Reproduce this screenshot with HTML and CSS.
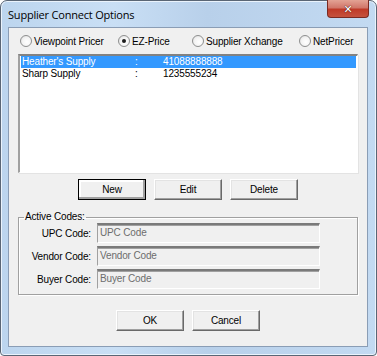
FILE: index.html
```html
<!DOCTYPE html>
<html>
<head>
<meta charset="utf-8">
<link rel="stylesheet" href="styles.css">
</head>
<body>
<div class="window">
  <div class="titlebar">
    <span class="title">Supplier Connect Options</span>
    <div class="close"><span class="x">✕</span></div>
  </div>
  <div class="client">
    <div class="radios">
      <label class="radio r1"><span class="dot"></span>Viewpoint Pricer</label>
      <label class="radio r2"><span class="dot checked"></span>EZ-Price</label>
      <label class="radio r3"><span class="dot"></span>Supplier Xchange</label>
      <label class="radio r4"><span class="dot"></span>NetPricer</label>
    </div>
    <div class="listbox">
      <div class="row selected"><span class="c1">Heather's Supply</span><span class="c2">:</span><span class="c3">41088888888</span></div>
      <div class="row"><span class="c1">Sharp Supply</span><span class="c2">:</span><span class="c3">1235555234</span></div>
    </div>
    <div class="btnrow top">
      <button class="btn default">New</button>
      <button class="btn">Edit</button>
      <button class="btn">Delete</button>
    </div>
    <fieldset class="group">
      <legend>Active Codes:</legend>
      <div class="field"><span class="flabel">UPC Code:</span><span class="input">UPC Code</span></div>
      <div class="field"><span class="flabel">Vendor Code:</span><span class="input">Vendor Code</span></div>
      <div class="field"><span class="flabel">Buyer Code:</span><span class="input">Buyer Code</span></div>
    </fieldset>
    <div class="btnrow bottom">
      <button class="btn">OK</button>
      <button class="btn">Cancel</button>
    </div>
  </div>
</div>
</body>
</html>
```
FILE: styles.css
```css
html, body {
  margin: 0;
  padding: 0;
  background: #ffffff;
}
body {
  width: 377px;
  height: 356px;
  overflow: hidden;
  font-family: "Liberation Sans", Arial, sans-serif;
  font-size: 10px;
  letter-spacing: -0.15px;
  color: #000;
}
.window {
  box-sizing: border-box;
  width: 377px;
  height: 356px;
  border: 1px solid #5a6675;
  border-radius: 7px 7px 4px 4px;
  background: linear-gradient(90deg, #bcd5ee 0%, #c9dff5 30%, #b8d0ea 55%, #c3daf2 100%);
  padding: 0 8px 8px 7px;
  display: flex;
  flex-direction: column;
  box-shadow: inset 0 0 0 1px #eaf3fc;
}
.titlebar {
  height: 26px;
  display: flex;
  align-items: flex-start;
  justify-content: space-between;
  flex-shrink: 0;
}
.title {
  font-family: "Open Sans", "Noto Sans", sans-serif;
  font-size: 11px;
  letter-spacing: -0.2px;
  margin-top: 6px;
  color: #000;
}
.close {
  width: 42px;
  height: 18px;
  margin-top: -1px;
  margin-right: -1px;
  border: 1px solid #7a2a22;
  border-top: none;
  border-radius: 0 0 4px 4px;
  background: linear-gradient(180deg, #e3a294 0%, #d1776a 45%, #bf3a28 55%, #c5523e 100%);
  display: flex;
  align-items: center;
  justify-content: center;
  box-sizing: border-box;
}
.x {
  color: #fff;
  font-family: "DejaVu Sans", sans-serif;
  font-weight: bold;
  font-size: 11px;
  text-shadow: 0 0 1px #4a1510, 0 0 1px #4a1510;
  margin-top: 1px;
}
.client {
  flex: 1;
  background: #f0f0f0;
  border: 1px solid #8a9db5;
  display: flex;
  flex-direction: column;
  padding: 0 9px 0 9px;
}
.radios {
  display: flex;
  height: 26px;
  align-items: center;
  flex-shrink: 0;
}
.radio {
  display: flex;
  align-items: center;
  gap: 2px;
  white-space: nowrap;
}
.r1 { margin-left: 2px; width: 98px; }
.r2 { width: 74px; }
.r3 { width: 107px; }
.dot {
  width: 12px;
  height: 12px;
  flex-shrink: 0;
  border-radius: 50%;
  border: 1px solid #8e8f8f;
  background: radial-gradient(circle at 60% 60%, #ffffff 0%, #f4f4f4 50%, #d9d9d9 100%);
  box-sizing: border-box;
  display: inline-flex;
  align-items: center;
  justify-content: center;
}
.dot.checked::after {
  content: "";
  width: 4px;
  height: 4px;
  border-radius: 50%;
  background: #1c1c1c;
}
.listbox {
  height: 119px;
  flex-shrink: 0;
  background: #fff;
  border-style: solid;
  border-width: 2px 1px 1px 2px;
  border-color: #828282 #ffffff #ffffff #a0a0a0;
  box-shadow: 1px 1px 0 #e3e3e3;
  padding: 0 1px;
  box-sizing: border-box;
}
.row {
  height: 12px;
  line-height: 12px;
  display: flex;
  padding-left: 1px;
}
.row.selected {
  background: #3399ff;
  color: #fff;
}
.c1 { width: 113px; }
.c2 { width: 28px; }
.btnrow {
  display: flex;
  flex-shrink: 0;
  gap: 8px;
}
.btnrow.top {
  margin-top: 6px;
  padding-left: 60px;
}
.btnrow.bottom {
  margin-top: 15px;
  padding-left: 98px;
}
.btn {
  width: 68px;
  height: 21px;
  font-family: "Liberation Sans", Arial, sans-serif;
  font-size: 10px;
  letter-spacing: -0.15px;
  color: #000;
  background: #f0f0f0;
  border-style: solid;
  border-width: 1px;
  border-color: #ffffff #696969 #696969 #ffffff;
  box-shadow: inset -1px -1px 0 #a0a0a0, inset 1px 1px 0 #e3e3e3;
  padding: 0;
  margin: 0;
}
.btn.default {
  outline: 1px solid #000;
  outline-offset: -1px;
  box-shadow: inset -2px -2px 0 #a0a0a0, inset 2px 2px 0 #ffffff;
}
.group {
  margin: 12px 0 0 0;
  padding: 1px 0 0 0;
  height: 83px;
  flex-shrink: 0;
  box-sizing: border-box;
  border: 1px solid #a0a0a0;
  box-shadow: 1px 1px 0 #fff, inset 1px 1px 0 #fff;
  display: flex;
  flex-direction: column;
  gap: 3px;
}
.group legend {
  padding: 0 1px;
  margin-left: 5px;
  line-height: 10px;
}
.field {
  display: flex;
  align-items: center;
  height: 20px;
}
.flabel {
  width: 72px;
  text-align: right;
  margin-right: 6px;
}
.input {
  box-sizing: border-box;
  width: 223px;
  height: 20px;
  line-height: 16px;
  background: #f0f0f0;
  color: #6d6d6d;
  padding-left: 2px;
  border-style: solid;
  border-width: 2px 1px 1px 1px;
  border-color: #7a7a7a #ffffff #ffffff #a0a0a0;
  box-shadow: inset 0 1px 0 #a0a0a0;
}
```
